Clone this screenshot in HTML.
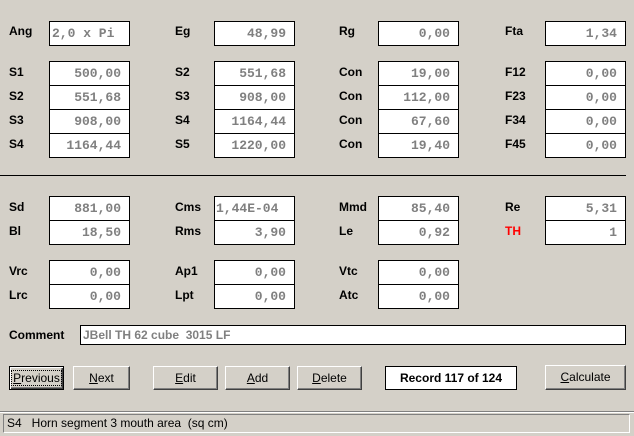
<!DOCTYPE html>
<html><head><style>
body{margin:0;width:634px;height:436px;background:#d4d0c8;position:relative;overflow:hidden;font-family:"Liberation Sans",sans-serif}
.l{position:absolute;font-weight:bold;font-size:12px;color:#000}
.b{position:absolute;box-sizing:border-box;background:#fff;border:1px solid #000;height:25px;width:81px;font-family:"Liberation Mono",monospace;font-size:13px;font-weight:bold;color:#808080;text-align:right;padding-right:8px;line-height:23px;white-space:pre}
.btn{position:absolute;box-sizing:border-box;top:366px;height:24px;background:#d4d0c8;border:1px solid;border-color:#fff #404040 #404040 #fff;box-shadow:inset -1px -1px 0 #808080;font-size:12px;text-align:center;line-height:22px}
</style></head><body>
<div class="l" style="left:9px;top:24px">Ang</div><div class="b" style="left:49px;top:21px;text-align:left;padding-left:2px">2,0 x Pi</div>
<div class="l" style="left:175px;top:24px">Eg</div><div class="b" style="left:214px;top:21px">48,99</div>
<div class="l" style="left:339px;top:24px">Rg</div><div class="b" style="left:378px;top:21px">0,00</div>
<div class="l" style="left:505px;top:24px">Fta</div><div class="b" style="left:545px;top:21px">1,34</div>

<div class="l" style="left:9px;top:65px">S1</div><div class="b" style="left:49px;top:61px">500,00</div>
<div class="l" style="left:9px;top:89px">S2</div><div class="b" style="left:49px;top:85px">551,68</div>
<div class="l" style="left:9px;top:113px">S3</div><div class="b" style="left:49px;top:109px">908,00</div>
<div class="l" style="left:9px;top:137px">S4</div><div class="b" style="left:49px;top:133px">1164,44</div>

<div class="l" style="left:175px;top:65px">S2</div><div class="b" style="left:214px;top:61px">551,68</div>
<div class="l" style="left:175px;top:89px">S3</div><div class="b" style="left:214px;top:85px">908,00</div>
<div class="l" style="left:175px;top:113px">S4</div><div class="b" style="left:214px;top:109px">1164,44</div>
<div class="l" style="left:175px;top:137px">S5</div><div class="b" style="left:214px;top:133px">1220,00</div>

<div class="l" style="left:339px;top:65px">Con</div><div class="b" style="left:378px;top:61px">19,00</div>
<div class="l" style="left:339px;top:89px">Con</div><div class="b" style="left:378px;top:85px">112,00</div>
<div class="l" style="left:339px;top:113px">Con</div><div class="b" style="left:378px;top:109px">67,60</div>
<div class="l" style="left:339px;top:137px">Con</div><div class="b" style="left:378px;top:133px">19,40</div>

<div class="l" style="left:505px;top:65px">F12</div><div class="b" style="left:545px;top:61px">0,00</div>
<div class="l" style="left:505px;top:89px">F23</div><div class="b" style="left:545px;top:85px">0,00</div>
<div class="l" style="left:505px;top:113px">F34</div><div class="b" style="left:545px;top:109px">0,00</div>
<div class="l" style="left:505px;top:137px">F45</div><div class="b" style="left:545px;top:133px">0,00</div>

<div style="position:absolute;left:0;top:175px;width:626px;height:1px;background:#000"></div>

<div class="l" style="left:9px;top:200px">Sd</div><div class="b" style="left:49px;top:196px">881,00</div>
<div class="l" style="left:9px;top:224px">Bl</div><div class="b" style="left:49px;top:220px">18,50</div>
<div class="l" style="left:175px;top:200px">Cms</div><div class="b" style="left:214px;top:196px;text-align:left;padding-left:1px">1,44E-04</div>
<div class="l" style="left:175px;top:224px">Rms</div><div class="b" style="left:214px;top:220px">3,90</div>
<div class="l" style="left:339px;top:200px">Mmd</div><div class="b" style="left:378px;top:196px">85,40</div>
<div class="l" style="left:339px;top:224px">Le</div><div class="b" style="left:378px;top:220px">0,92</div>
<div class="l" style="left:505px;top:200px">Re</div><div class="b" style="left:545px;top:196px">5,31</div>
<div class="l" style="left:505px;top:224px;color:#f00">TH</div><div class="b" style="left:545px;top:220px">1</div>

<div class="l" style="left:9px;top:264px">Vrc</div><div class="b" style="left:49px;top:260px">0,00</div>
<div class="l" style="left:9px;top:288px">Lrc</div><div class="b" style="left:49px;top:284px">0,00</div>
<div class="l" style="left:175px;top:264px">Ap1</div><div class="b" style="left:214px;top:260px">0,00</div>
<div class="l" style="left:175px;top:288px">Lpt</div><div class="b" style="left:214px;top:284px">0,00</div>
<div class="l" style="left:339px;top:264px">Vtc</div><div class="b" style="left:378px;top:260px">0,00</div>
<div class="l" style="left:339px;top:288px">Atc</div><div class="b" style="left:378px;top:284px">0,00</div>

<div class="l" style="left:9px;top:328px">Comment</div>
<div class="b" style="left:80px;top:325px;width:546px;height:20px;line-height:18px;text-align:left;padding-left:2px;font-family:'Liberation Sans',sans-serif;font-weight:bold;font-size:12px">JBell TH 62 cube  3015 LF</div>

<div class="btn" style="left:9px;width:55px;border:1px solid #000;box-shadow:inset 1px 1px 0 #fff,inset -1px -1px 0 #404040,inset -2px -2px 0 #808080"><span style="outline:1px dotted #000;padding:0 1px"><u>P</u>revious</span></div>
<div class="btn" style="left:73px;width:57px"><u>N</u>ext</div>
<div class="btn" style="left:153px;width:65px"><u>E</u>dit</div>
<div class="btn" style="left:225px;width:65px"><u>A</u>dd</div>
<div class="btn" style="left:297px;width:65px"><u>D</u>elete</div>
<div style="position:absolute;left:385px;top:366px;width:132px;height:24px;box-sizing:border-box;background:#fff;border:1px solid #000;font-weight:bold;font-size:12px;text-align:center;line-height:22px">Record 117 of 124</div>
<div class="btn" style="left:545px;top:365px;width:81px;height:25px"><u>C</u>alculate</div>

<div style="position:absolute;left:0;top:411px;width:634px;height:1px;background:#808080"></div>
<div style="position:absolute;left:0;top:412px;width:634px;height:1px;background:#fff"></div>
<div style="position:absolute;left:3px;top:414px;width:627px;height:19px;box-sizing:border-box;border:1px solid;border-color:#808080 #fff #fff #808080;font-size:12px;line-height:17px;padding-left:3px">S4&nbsp;&nbsp; Horn segment 3 mouth area&nbsp; (sq cm)</div>
</body></html>
